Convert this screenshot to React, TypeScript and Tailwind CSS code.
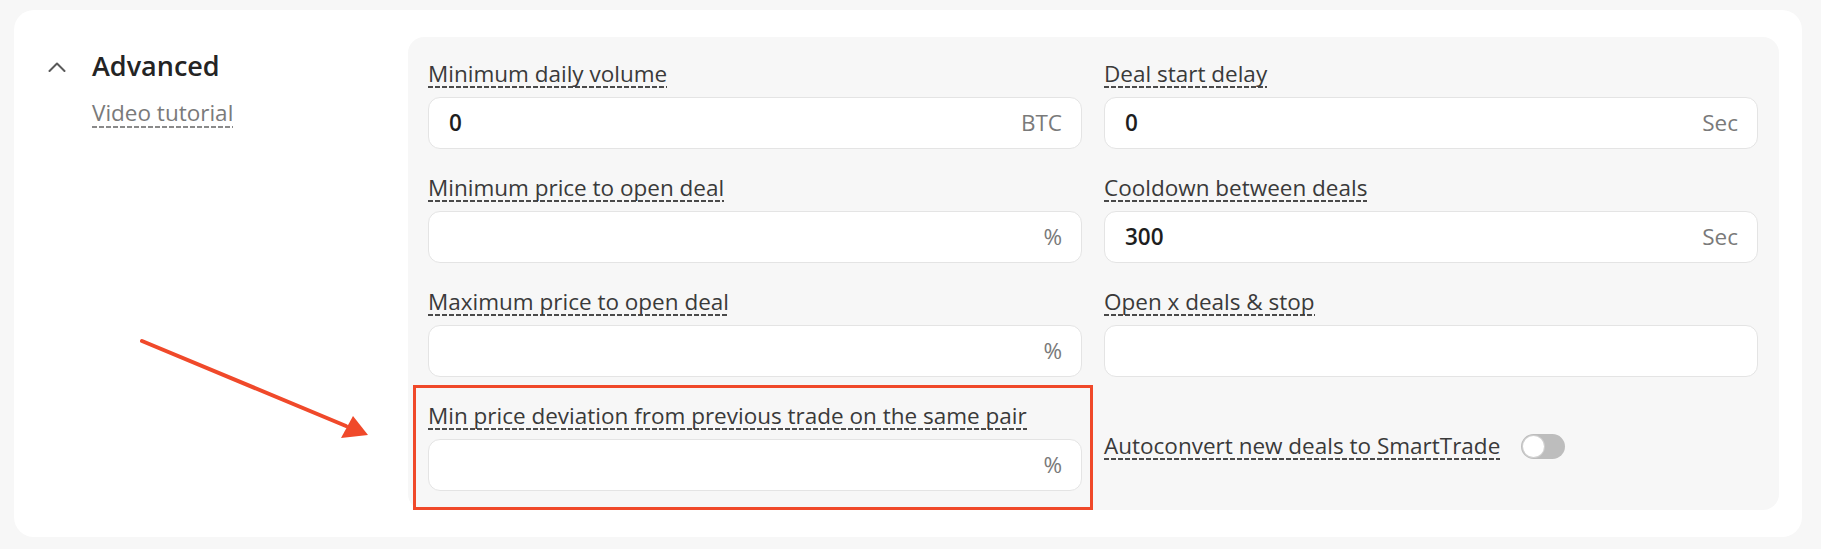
const dashed =
  "inline-block leading-[30px] bg-[linear-gradient(to_right,#4a4a4a_65%,transparent_65%)] bg-[length:7px_1.5px] bg-repeat-x bg-[position:0_27px]";

const Label = ({ text }: { text: string }) => (
  <div className="h-[30px]">
    <span className={`${dashed} text-[22.5px] text-[#3a3a3a]`}>{text}</span>
  </div>
);

const Field = ({ label, value, suffix }: { label: string; value?: string; suffix?: string }) => (
  <div className="flex flex-col gap-[8px]">
    <Label text={label} />
    <div className="flex items-center h-[52px] rounded-[12px] border border-[#e4e4e4] bg-white pl-[20px] pr-[19px]">
      <input
        readOnly
        value={value ?? ""}
        className="flex-1 min-w-0 bg-transparent outline-none text-[22.5px] font-semibold text-[#1e1e1e]"
      />
      {suffix && <span className="text-[22.5px] text-[#7a7a7a]">{suffix}</span>}
    </div>
  </div>
);

export default function App() {
  return (
    <div className="relative h-[549px] bg-[#f7f7f7] pl-[14px] pr-[19px] pt-[10px] pb-[12px] font-['Open_Sans',sans-serif]">
      <div className="flex h-full rounded-[20px] bg-white pl-[34px] pr-[23px] py-[27px]">
        {/* left column */}
        <div className="w-[360px] shrink-0 flex gap-[26px] pt-[11px]">
          <svg width="18" height="10" viewBox="0 0 18 10" className="mt-[14px] shrink-0">
            <polyline points="1.5,9 9,1.5 16.5,9" fill="none" stroke="#5a5a5a" strokeWidth="2" strokeLinecap="round" strokeLinejoin="round" />
          </svg>
          <div className="flex flex-col gap-[14px]">
            <div className="text-[27px] leading-[36px] font-semibold text-[#242424]">Advanced</div>
            <div>
              <span className="inline-block leading-[30px] text-[22.5px] text-[#7a7a7a] bg-[linear-gradient(to_right,#8a8a8a_65%,transparent_65%)] bg-[length:7px_1.5px] bg-repeat-x bg-[position:0_28px]">
                Video tutorial
              </span>
            </div>
          </div>
        </div>

        {/* settings panel */}
        <div className="flex-1 rounded-[16px] bg-[#f7f7f7] pl-[20px] pr-[21px] pt-[22px] pb-[20px]">
          <div className="grid grid-cols-2 gap-x-[22px] gap-y-[24px] items-start">
            <Field label="Minimum daily volume" value="0" suffix="BTC" />
            <Field label="Deal start delay" value="0" suffix="Sec" />
            <Field label="Minimum price to open deal" suffix="%" />
            <Field label="Cooldown between deals" value="300" suffix="Sec" />
            <Field label="Maximum price to open deal" suffix="%" />
            <Field label="Open x deals & stop" />
            <div className="relative">
              <Field label="Min price deviation from previous trade on the same pair" suffix="%" />
              <div className="absolute -left-[15px] -top-[16px] -right-[11px] -bottom-[19px] border-[3px] border-[#f0492a] pointer-events-none" />
            </div>
            <div className="self-center flex items-center gap-[21px]">
              <span className={`${dashed} text-[22.5px] text-[#3a3a3a]`}>Autoconvert new deals to SmartTrade</span>
              <div className="flex items-center w-[44px] h-[25px] rounded-full bg-[#bdbdbd] p-[2px]">
                <div className="w-[21px] h-[21px] rounded-full bg-white shadow-[0_0_0_1px_#d0d0d0]" />
              </div>
            </div>
          </div>
        </div>
      </div>

      {/* annotation arrow */}
      <svg className="absolute left-[130px] top-[330px] pointer-events-none" width="250" height="120" viewBox="0 0 250 120">
        <line x1="12" y1="11" x2="216" y2="96" stroke="#f0492a" strokeWidth="4" strokeLinecap="round" />
        <polygon points="238,105 211,108 223,86" fill="#f0492a" />
      </svg>
    </div>
  );
}
